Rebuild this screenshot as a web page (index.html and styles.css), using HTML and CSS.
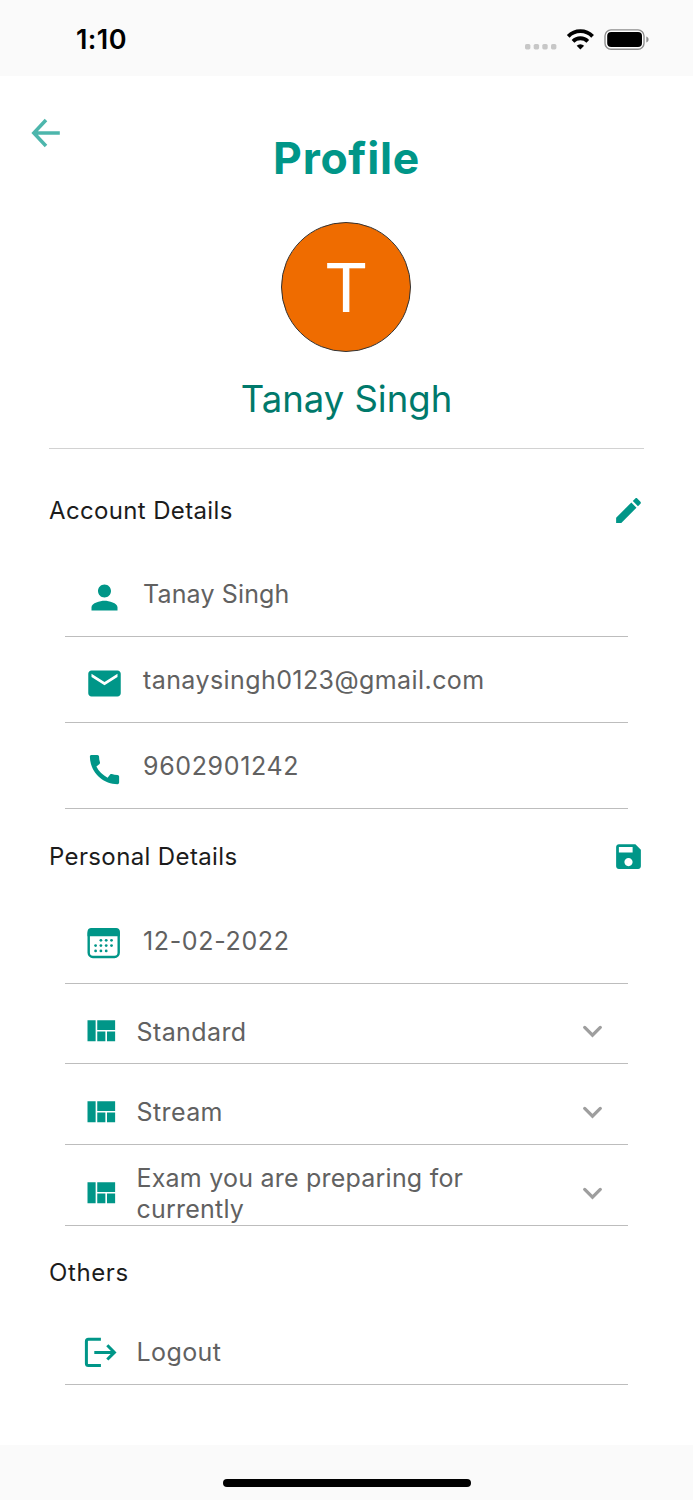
FILE: index.html
```html
<!DOCTYPE html>
<html lang="en">
<head>
<meta charset="utf-8">
<title>Profile</title>
<link rel="stylesheet" href="styles.css">
</head>
<body>
<svg class="defs" width="0" height="0" aria-hidden="true">
  <symbol id="quilt" viewBox="0 0 24 24"><path d="M10 18h5v-6h-5v6zm-6 0h5V5H4v13zm12 0h5v-6h-5v6zM10 5v6h11V5H10z"/></symbol>
  <symbol id="chevron" viewBox="0 0 24 24"><path d="M7.2 9.5 12 14.3l4.8-4.8" fill="none" stroke="currentColor" stroke-width="2" stroke-linecap="round"/></symbol>
</svg>
<header class="status">
  <span class="time">1:10</span>
  <svg class="signals" width="126" height="24" viewBox="0 0 126 24">
    <g fill="#c7c7c7"><rect x="1" y="16" width="5.4" height="5.4" rx="1.6"/><rect x="9.7" y="16" width="5.4" height="5.4" rx="1.6"/><rect x="18.3" y="16" width="5.4" height="5.4" rx="1.6"/><rect x="27" y="16" width="5.4" height="5.4" rx="1.6"/></g>
    <g fill="none" stroke="#000" stroke-width="3.8"><path d="M44.2 8.3a17.2 17.2 0 0 1 24.4 0"/><path d="M49 13.3a10.500 10.500 0 0 1 14.800 0"/></g>
    <path d="M56.400 21.500l-3.700-3.800a5.200 5.200 0 0 1 7.400 0z"/>
    <rect x="81" y="1.900" width="39" height="19.400" rx="6" fill="#fff" stroke="#8e8e8e" stroke-width="1.400"/>
    <rect x="83.200" y="4.100" width="34.800" height="15" rx="4"/>
    <path d="M122.300 8.600c3 1.200 3 4.800 0 6z" fill="#8e8e8e"/>
  </svg>
</header>
<main class="page">
  <div class="top">
    <svg class="back" width="30" height="30" viewBox="0 0 30 30"><path d="M15 2 2.800 15 15 28M3 15h25.800" fill="none" stroke="currentColor" stroke-width="3.500"/></svg>
    <h1 class="title">Profile</h1>
    <div class="avatar">T</div>
    <p class="name">Tanay Singh</p>
  </div>
  <section class="section">
    <div class="heading"><h2 class="label account">Account Details</h2>
      <svg class="action" viewBox="0 0 24 24"><path d="M3 17.250V21h3.750L17.810 9.940l-3.750-3.750L3 17.250zM20.710 7.040c.39-.39.39-1.020 0-1.410l-2.340-2.340c-.39-.39-1.020-.39-1.410 0l-1.830 1.830 3.750 3.750 1.830-1.830z"/></svg></div>
    <div class="row field"><svg class="icon" viewBox="0 0 24 24"><path d="M12 12c2.210 0 4-1.790 4-4s-1.790-4-4-4-4 1.790-4 4 1.790 4 4 4zm0 2c-2.670 0-8 1.340-8 4v2h16v-2c0-2.660-5.330-4-8-4z"/></svg><span class="text user">Tanay Singh</span></div>
    <div class="row field"><svg class="icon" viewBox="0 0 24 24"><path d="M20 4H4c-1.100 0-1.990.9-1.990 2L2 18c0 1.100.9 2 2 2h16c1.100 0 2-.9 2-2V6c0-1.100-.9-2-2-2zm0 4-8 5-8-5V6l8 5 8-5v2z"/></svg><span class="text email">tanaysingh0123@gmail.com</span></div>
    <div class="row field"><svg class="icon" viewBox="0 0 24 24"><path d="M20.010 15.380c-1.230 0-2.420-.2-3.530-.56-.35-.12-.74-.03-1.010.24l-1.570 1.970c-2.830-1.350-5.480-3.900-6.890-6.830l1.950-1.660c.27-.28.35-.67.24-1.020-.37-1.110-.56-2.300-.56-3.530 0-.54-.45-.99-.99-.99H4.190C3.650 3 3 3.240 3 3.990 3 13.280 10.730 21 20.010 21c.71 0 .99-.63.99-1.180v-3.450c0-.54-.45-.99-.99-.99z"/></svg><span class="text phone">9602901242</span></div>
  </section>
  <section class="section">
    <div class="heading"><h2 class="label personal">Personal Details</h2>
      <svg class="action save" viewBox="0 0 24 24"><path d="M17 3H5c-1.110 0-2 .9-2 2v14c0 1.100.89 2 2 2h14c1.100 0 2-.9 2-2V7l-4-4zm-5 16c-1.660 0-3-1.340-3-3s1.340-3 3-3 3 1.340 3 3-1.340 3-3 3zm3-10H5V5h10v4z"/></svg></div>
    <div class="row field"><svg class="icon calendar" viewBox="0 0 39 39"><rect x="3.700" y="4.200" width="30" height="27.800" rx="4.200" fill="none" stroke="currentColor" stroke-width="2.400"/><path d="M2.500 11.200V7a4 4 0 0 1 4-4h24.400a4 4 0 0 1 4 4v4.200z"/><g><circle cx="15.900" cy="15.300" r="1.400"/><circle cx="21.200" cy="15.300" r="1.400"/><circle cx="26.500" cy="15.300" r="1.400"/><circle cx="10.600" cy="20.600" r="1.400"/><circle cx="15.900" cy="20.600" r="1.400"/><circle cx="21.200" cy="20.600" r="1.400"/><circle cx="26.500" cy="20.600" r="1.400"/><circle cx="10.600" cy="25.900" r="1.400"/><circle cx="15.900" cy="25.900" r="1.400"/><circle cx="21.200" cy="25.900" r="1.400"/></g></svg><span class="text date">12-02-2022</span></div>
    <div class="row select short"><svg class="icon"><use href="#quilt"/></svg><span class="text standard">Standard</span><svg class="chevron"><use href="#chevron"/></svg></div>
    <div class="row select"><svg class="icon"><use href="#quilt"/></svg><span class="text stream">Stream</span><svg class="chevron"><use href="#chevron"/></svg></div>
    <div class="row select"><svg class="icon"><use href="#quilt"/></svg><span class="text exam">Exam you are preparing for currently</span><svg class="chevron"><use href="#chevron"/></svg></div>
  </section>
  <section class="section others">
    <div class="heading"><h2 class="label">Others</h2></div>
    <div class="row select"><svg class="icon" viewBox="0 0 39 39"><path d="M19.900 6.200H7.400a2 2 0 0 0-2 2v22.400a2 2 0 0 0 2 2h12.500M13.300 19.400h20M26.300 12.300l7.100 7.100-7.100 7.100" fill="none" stroke="currentColor" stroke-width="3"/></svg><span class="text logout">Logout</span></div>
  </section>
</main>
<footer class="home"><div class="bar"></div></footer>
</body>
</html>
```
FILE: styles.css
```css
* { box-sizing: border-box; }
body {
  margin: 0;
  height: 1500px;
  display: flex;
  flex-direction: column;
  background: #fafafa;
  font-family: Inter, Roboto, sans-serif;
  overflow: hidden;
}
h1, h2, p { margin: 0; }
svg { display: block; flex: none; fill: currentColor; }
.defs { position: absolute; }
.status {
  height: 76px;
  display: flex;
  justify-content: space-between;
  align-items: center;
  padding: 3px 43px 0 76px;
}
.time { font-size: 27px; font-weight: 600; line-height: 32px; letter-spacing: 0.4px; }
.signals { fill: #000; }
.page {
  height: 1369px;
  background: #fff;
  color: #009688;
  padding: 0 49px;
}
.top {
  height: 373px;
  display: flex;
  flex-direction: column;
  align-items: center;
  position: relative;
  border-bottom: 1px solid #d2d2d2;
}
.back { position: absolute; left: -18px; top: 42px; color: #4db6ac; }
.title { margin-top: 54px; font-size: 44.5px; line-height: 56px; font-weight: 700; letter-spacing: 0.7px; white-space: nowrap; }
.avatar {
  width: 130px;
  height: 130px;
  margin: 36px 1px 0 0;
  border: 1px solid #333;
  border-radius: 50%;
  background: #ef6c00;
  color: #fff;
  font: 69px/131px Roboto, sans-serif;
  text-align: center;
}
.name { margin-top: 24px; color: #00796b; font-size: 36.5px; line-height: 46px; white-space: nowrap; }
.section { padding-top: 18px; }
.top + .section { padding-top: 31px; }
.heading {
  height: 60px;
  margin-bottom: 11px;
  display: flex;
  align-items: center;
  justify-content: space-between;
}
.others { padding-top: 17px; }
.others .heading { margin-bottom: 1px; }
.label { color: #1c1c1c; font-size: 24px; line-height: 30px; font-weight: 400; letter-spacing: 0.6px; white-space: nowrap; }
.account { padding-top: 1px; letter-spacing: 0.35px; }
.personal { letter-spacing: 0.37px; }
.action { width: 33px; height: 33px; margin-right: -0.5px; }
.save { margin-bottom: 1px; }
.row {
  margin: 0 16px;
  display: flex;
  align-items: center;
  border-bottom: 1px solid #bdbdbd;
}
.field { height: 86px; padding-left: 19.5px; }
.field .icon { margin: 8px 19.5px 0 0; }
.field .text { padding-top: 1px; }
.select { height: 81px; padding: 16px 16px 0; }
.short { height: 80px; }
.icon { width: 39px; height: 39px; }
.select .icon { margin-right: 16.5px; }
.text { color: #616161; font-size: 25px; line-height: 30.6px; letter-spacing: 0.4px; }
.select .text { width: 340px; padding-top: 1px; }
.user { letter-spacing: 0.15px; }
.email { letter-spacing: 0.42px; }
.phone, .date { letter-spacing: 0.65px; }
.exam { letter-spacing: 0.22px; }
.chevron { width: 39px; height: 39px; margin-left: auto; color: #9e9e9e; }
.home { height: 55px; padding-top: 34px; }
.bar { width: 248px; height: 8px; margin: 0 auto; border-radius: 4px; background: #000; }
```
